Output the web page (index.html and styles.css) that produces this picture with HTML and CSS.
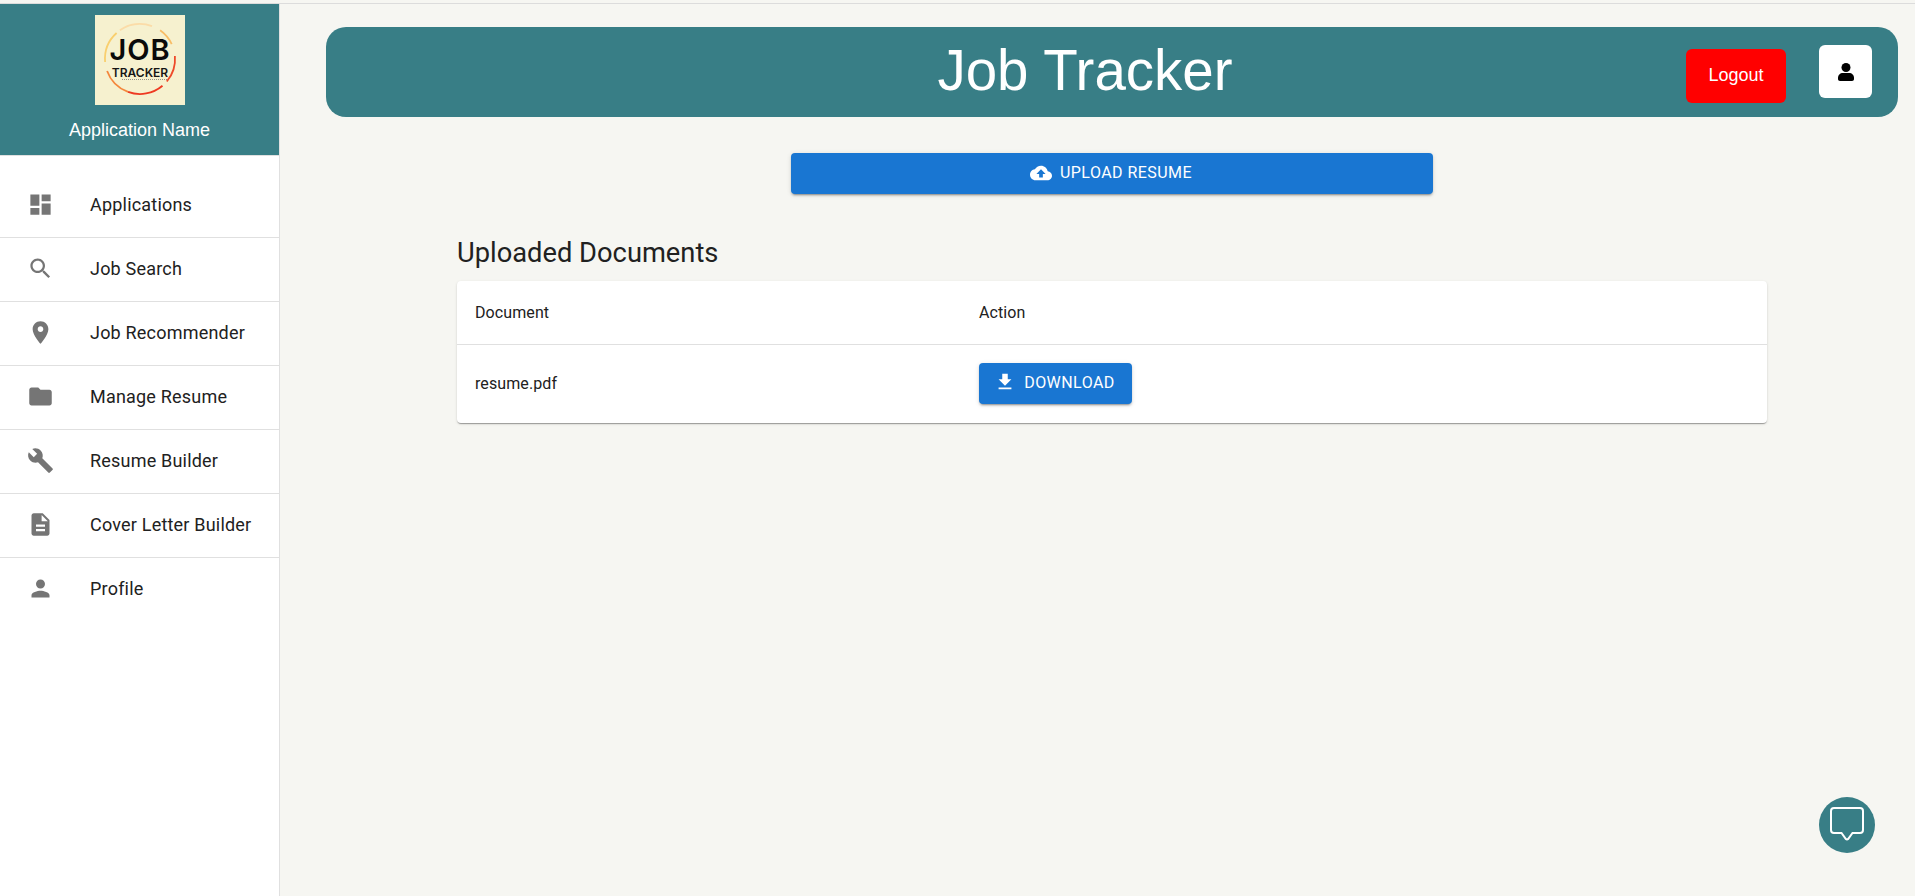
FILE: index.html
```html
<!DOCTYPE html>
<html lang="en">
<head>
    <meta charset="UTF-8">
    <title>Job Tracker</title>

    <link rel="stylesheet" href="styles.css">
</head>
<body>
<div class="top-line"></div>
<div class="layout">
    <aside class="sidebar">
        <div class="brand">
            <svg class="logo" viewBox="0 0 90 90">
                <rect width="90" height="90" fill="#f6f1cf"/>
                <path class="ring" d="M24.900 15.300A35 35 0 0 1 57 11.100" stroke="#fbdca8"/>
                <path class="ring" d="M65.100 15.300A35 35 0 0 1 76.700 29.200" stroke="#f8bd66"/>
                <path class="ring" d="M79.900 41A35 35 0 0 1 71.800 66.500" stroke="#ee4a2a"/>
                <path class="ring" d="M67.500 70.800A35 35 0 0 1 33 76.900" stroke="#ee3a22"/>
                <path class="ring" d="M33 76.900A35 35 0 0 1 12.100 56" stroke="#f4873c"/>
                <path class="ring" d="M10.100 47A35 35 0 0 1 21.600 18" stroke="#f9cf6e"/>
                <text class="logo-big" x="45" y="45" text-anchor="middle">JOB</text>
                <text class="logo-small" x="45" y="62" text-anchor="middle">TRACKER</text>
                <path d="M27 64.500H73" stroke="#555" stroke-width="0.6" stroke-dasharray="1 1"/>
            </svg>
            <div class="app-name">Application Name</div>
        </div>
        <nav class="menu">
            <a class="menu-item">
                <svg class="menu-icon" viewBox="0 0 24 24"><path d="M3 13h8V3H3v10zm0 8h8v-6H3v6zm10 0h8V11h-8v10zm0-18v6h8V3h-8z"/></svg>
                <span>Applications</span>
            </a>
            <a class="menu-item">
                <svg class="menu-icon" viewBox="0 0 24 24"><path d="M15.5 14h-.79l-.28-.27C15.41 12.59 16 11.11 16 9.5 16 5.91 13.09 3 9.5 3S3 5.91 3 9.5 5.91 16 9.5 16c1.61 0 3.09-.59 4.23-1.57l.27.28v.79l5 4.99L20.49 19l-4.99-5zm-6 0C7.01 14 5 11.99 5 9.5S7.01 5 9.5 5 14 7.01 14 9.5 11.99 14 9.5 14z"/></svg>
                <span>Job Search</span>
            </a>
            <a class="menu-item">
                <svg class="menu-icon" viewBox="0 0 24 24"><path d="M12 2C8.13 2 5 5.13 5 9c0 5.25 7 13 7 13s7-7.75 7-13c0-3.87-3.13-7-7-7zm0 9.5c-1.38 0-2.5-1.12-2.5-2.5s1.12-2.5 2.5-2.5 2.5 1.12 2.5 2.5-1.12 2.5-2.5 2.5z"/></svg>
                <span>Job Recommender</span>
            </a>
            <a class="menu-item">
                <svg class="menu-icon" viewBox="0 0 24 24"><path d="M10 4H4c-1.1 0-1.99.9-1.99 2L2 18c0 1.1.9 2 2 2h16c1.1 0 2-.9 2-2V8c0-1.1-.9-2-2-2h-8l-2-2z"/></svg>
                <span>Manage Resume</span>
            </a>
            <a class="menu-item">
                <svg class="menu-icon" viewBox="0 0 24 24"><path d="M22.7 19l-9.1-9.1c.9-2.3.4-5-1.5-6.9-2-2-5-2.4-7.4-1.3L9 6 6 9 1.6 4.7C.4 7.1.9 10.1 2.9 12.1c1.9 1.9 4.6 2.4 6.9 1.5l9.1 9.1c.4.4 1 .4 1.4 0l2.3-2.3c.5-.4.5-1.1.1-1.4z"/></svg>
                <span>Resume Builder</span>
            </a>
            <a class="menu-item">
                <svg class="menu-icon" viewBox="0 0 24 24"><path d="M14 2H6c-1.1 0-1.99.9-1.99 2L4 20c0 1.1.89 2 1.99 2H18c1.1 0 2-.9 2-2V8l-6-6zm2 16H8v-2h8v2zm0-4H8v-2h8v2zm-3-5V3.5L18.5 9H13z"/></svg>
                <span>Cover Letter Builder</span>
            </a>
            <a class="menu-item last">
                <svg class="menu-icon" viewBox="0 0 24 24"><path d="M12 12c2.21 0 4-1.79 4-4s-1.79-4-4-4-4 1.79-4 4 1.79 4 4 4zm0 2c-2.67 0-8 1.34-8 4v2h16v-2c0-2.66-5.33-4-8-4z"/></svg>
                <span>Profile</span>
            </a>
        </nav>
    </aside>

    <main class="content">
        <header class="title-bar">
            <h1 class="title">Job Tracker</h1>
            <button class="logout-btn">Logout</button>
            <button class="user-btn">
                <svg class="user-icon" viewBox="0 0 16 18"><circle cx="8" cy="4.500" r="4.500"/><path d="M0 15c0-3 2-5 5-5h6c3 0 5 2 5 5v1c0 1-.8 2-2 2H2c-1.200 0-2-1-2-2z"/></svg>
            </button>
        </header>

        <button class="btn upload-btn">
            <svg class="btn-icon" viewBox="0 0 24 24"><path d="M19.35 10.04C18.67 6.59 15.64 4 12 4 9.11 4 6.6 5.64 5.35 8.04 2.34 8.36 0 10.91 0 14c0 3.31 2.69 6 6 6h13c2.76 0 5-2.24 5-5 0-2.64-2.05-4.78-4.65-4.96zM14 13v4h-4v-4H7l5-5 5 5h-3z"/></svg>
            UPLOAD RESUME
        </button>

        <section class="documents">
            <h2 class="documents-title">Uploaded Documents</h2>
            <div class="card">
                <div class="row head-row">
                    <div class="cell doc-cell">Document</div>
                    <div class="cell">Action</div>
                </div>
                <div class="row body-row">
                    <div class="cell doc-cell">resume.pdf</div>
                    <div class="cell">
                        <button class="btn download-btn">
                            <svg class="btn-icon" viewBox="0 0 24 24"><path d="M19 9h-4V3H9v6H5l7 7 7-7zM5 18v2h14v-2H5z"/></svg>
                            DOWNLOAD
                        </button>
                    </div>
                </div>
            </div>
        </section>
    </main>
</div>

<button class="chat-btn">
    <svg class="chat-icon" viewBox="0 0 34 34"><path d="M4 1h26a3 3 0 0 1 3 3v19a3 3 0 0 1-3 3h-7.500l-4.400 6a1.500 1.500 0 0 1-2.200 0l-4.400-6H4a3 3 0 0 1-3-3V4a3 3 0 0 1 3-3z"/></svg>
</button>
</body>
</html>
```

FILE: styles.css
```css
* {
    box-sizing: border-box;
}

html, body {
    height: 100%;
}

body {
    margin: 0;
    background-color: #f6f6f2;
    font-family: Roboto, sans-serif;
    color: #212121;
    overflow: hidden;
}

button {
    border: none;
    cursor: pointer;
    font-family: inherit;
}

.top-line {
    height: 4px;
    border-bottom: 1px solid #dcdcdc;
}

.layout {
    display: flex;
    height: calc(100% - 4px);
}

/* sidebar */
.sidebar {
    width: 280px;
    flex-shrink: 0;
    background-color: #fff;
    border-right: 1px solid #e0e0e0;
}

.brand {
    height: 152px;
    padding-top: 11px;
    background-color: #387e86;
    border-bottom: 1px solid #e0e0e0;
    text-align: center;
}

.logo {
    display: block;
    width: 90px;
    height: 90px;
    margin: 0 auto;
}

.ring {
    fill: none;
    stroke-width: 1.8;
}

.logo-big {
    font-family: Inter, sans-serif;
    font-size: 29px;
    font-weight: 600;
    letter-spacing: 1px;
    fill: #0a0a0a;
}

.logo-small {
    font-family: Inter, sans-serif;
    font-size: 12px;
    font-weight: 600;
    fill: #151515;
}

.app-name {
    margin-top: 13px;
    font-family: "Liberation Sans", sans-serif;
    font-size: 18px;
    line-height: 24px;
    color: #fff;
}

.menu {
    padding-top: 18px;
}

.menu-item {
    display: flex;
    align-items: center;
    height: 64px;
    padding-left: 27px;
    padding-bottom: 3px;
    border-bottom: 1px solid #e0e0e0;
    font-size: 18px;
    letter-spacing: 0.2px;
}

.menu-item.last {
    border-bottom: none;
}

.menu-icon {
    width: 27px;
    height: 27px;
    margin-right: 36px;
    fill: #757575;
}

/* main part */
.content {
    flex: 1;
    display: flex;
    flex-direction: column;
    align-items: center;
    padding: 23px 17px 0 46px;
}

.title-bar {
    display: flex;
    align-items: center;
    width: 100%;
    height: 90px;
    padding-right: 26px;
    background-color: #387e86;
    border-radius: 20px;
}

.title {
    flex: 1;
    margin: 0;
    padding-left: 158px;
    padding-bottom: 3px;
    font-family: "Liberation Sans", sans-serif;
    font-size: 56.500px;
    font-weight: 400;
    color: #fff;
    text-align: center;
}

.logout-btn {
    width: 100px;
    height: 54px;
    margin-top: 8px;
    margin-right: 33px;
    padding: 0 0 2px;
    background-color: #f00;
    color: #fff;
    border-radius: 6px;
    font-family: "Liberation Sans", sans-serif;
    font-size: 18px;
}

.user-btn {
    display: flex;
    align-items: center;
    justify-content: center;
    width: 53px;
    height: 53px;
    margin-bottom: 1px;
    padding: 0;
    background-color: #fff;
    border-radius: 6px;
}

.user-icon {
    width: 16px;
    height: 18px;
    fill: #000;
}

.btn {
    display: flex;
    align-items: center;
    justify-content: center;
    height: 41px;
    padding: 0 2px 2px 0;
    background-color: #1976d2;
    color: #fff;
    border-radius: 4px;
    font-size: 16px;
    font-weight: 400;
    letter-spacing: 0.45px;
    box-shadow: 0 3px 1px -2px rgba(0,0,0,0.2), 0 2px 2px 0 rgba(0,0,0,0.14), 0 1px 5px 0 rgba(0,0,0,0.12);
}

.btn-icon {
    width: 22px;
    height: 22px;
    margin-right: 8px;
    fill: #fff;
}

.upload-btn {
    width: 642px;
    margin-top: 36px;
    flex-shrink: 0;
}

.documents {
    width: 1310px;
    margin-top: 41px;
}

.documents-title {
    margin: 0 0 10px;
    font-size: 27.300px;
    font-weight: 400;
    line-height: 36px;
}

.card {
    background-color: #fff;
    border-radius: 4px;
    box-shadow: 0 2px 1px -1px rgba(0,0,0,0.2), 0 1px 1px 0 rgba(0,0,0,0.14), 0 1px 3px 0 rgba(0,0,0,0.12);
}

.row {
    display: flex;
    align-items: center;
    font-size: 16px;
    letter-spacing: 0.1px;
}

.head-row {
    height: 64px;
    border-bottom: 1px solid #e0e0e0;
}

.body-row {
    height: 78px;
    padding-bottom: 2px;
}

.cell {
    padding-left: 18px;
}

.doc-cell {
    width: 504px;
}

.download-btn {
    width: 153px;
}

.chat-btn {
    position: fixed;
    left: 1819px;
    top: 797px;
    display: flex;
    justify-content: center;
    align-items: flex-start;
    width: 56px;
    height: 56px;
    padding: 10px 0 0;
    background-color: #387e86;
    border-radius: 50%;
}

.chat-icon {
    width: 34px;
    height: 34px;
    fill: none;
    stroke: #fff;
    stroke-width: 2;
}
```
